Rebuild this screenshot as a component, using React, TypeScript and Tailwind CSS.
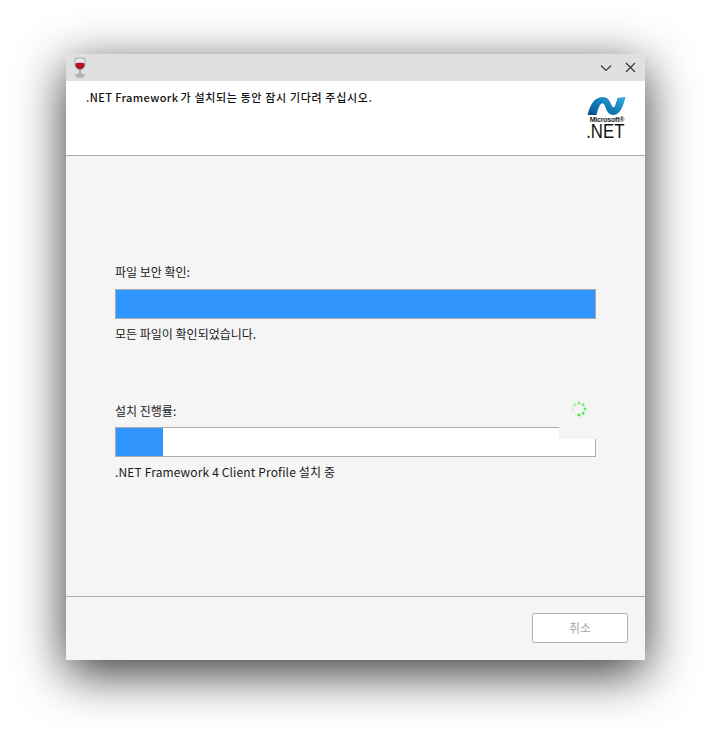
const font = { fontFamily: '"Noto Sans CJK KR", "Noto Sans", sans-serif' };

function WineGlass() {
  return (
    <svg width="14" height="21" viewBox="0 0 14 21">
      <path d="M2.5 1 H11.5 C12.6 5 12.6 8.5 11.2 10.5 C10.2 12 8.6 12.6 7 12.6 C5.4 12.6 3.8 12 2.8 10.5 C1.4 8.5 1.4 5 2.5 1 Z" fill="#e4e4e4" stroke="#9a9a9a" strokeWidth="0.8" />
      <path d="M2.3 6.6 C4.5 5.6 9.5 5.6 11.7 6.6 C11.9 10 9.8 12.2 7 12.2 C4.2 12.2 2.1 10 2.3 6.6 Z" fill="#b5101f" />
      <rect x="6.1" y="12.6" width="1.8" height="5" fill="#a8a8a8" />
      <ellipse cx="7" cy="18.6" rx="4.3" ry="1.6" fill="#c4c4c4" stroke="#8e8e8e" strokeWidth="0.7" />
    </svg>
  );
}

function NetLogo() {
  return (
    <div className="flex w-[42px] flex-col items-center">
      <svg width="39" height="18" viewBox="0 0 38 18">
        <defs>
          <linearGradient id="netBlue" x1="0" x2="1" y1="1" y2="0">
            <stop offset="0" stopColor="#0a4f86" />
            <stop offset="0.5" stopColor="#137fbd" />
            <stop offset="1" stopColor="#35ade2" />
          </linearGradient>
        </defs>
        <path d="M0 18 C2 10 6 0 15 0 C21 0 22 4 24 8 C25.5 11 26.5 11 27.5 9 L30 1 L38 0 C36 8 33 18 26 18 C20 18 19 12 17 8 C15.5 5 13.5 6 12 9 C10.5 12 9.5 15 9 18 Z" fill="url(#netBlue)" />
      </svg>
      <span className="mt-[2px] pl-[2px] text-[7px] font-bold leading-[6px] tracking-[-0.2px] text-[#222]" style={{ fontFamily: '"Liberation Sans", sans-serif' }}>Microsoft®</span>
      <span className="origin-right scale-x-[0.8] self-end pr-[3px] text-[21px] leading-[15px] text-[#111]" style={{ fontFamily: '"Liberation Sans", sans-serif' }}>.NET</span>
    </div>
  );
}

function Spinner() {
  const dots = [
    [8, 2, 0.65], [12.2, 3.8, 0.7], [14, 8, 0.8], [12.2, 12.2, 0.9], [8, 14, 1], [3.8, 12.2, 0.06], [2, 8, 0.2], [3.8, 3.8, 0.45],
  ];
  return (
    <svg width="16" height="16" viewBox="0 0 16 16">
      {dots.map(([x, y, o], i) => (
        <path key={i} d={`M${x - 1.5} ${y - 0.5}h1v-1h1v1h1v1h-1v1h-1v-1h-1z`} fill="#00e800" opacity={o} />
      ))}
    </svg>
  );
}

function Bar({ percent }: { percent: number }) {
  return (
    <div className="h-[30px] border border-[#ababab] bg-white">
      <div className="h-full bg-[#3096fe]" style={{ width: `${percent}%` }} />
    </div>
  );
}

export default function App() {
  return (
    <div className="h-[738px] w-[711px] overflow-hidden bg-white pl-[66px] pt-[54px]" style={font}>
      <div className="flex h-[606px] w-[579px] flex-col overflow-hidden rounded-t-[6px] bg-[#f5f5f5] shadow-[0_13px_50px_rgba(0,0,0,0.8)]">
        <div className="flex h-[27px] shrink-0 items-center justify-between bg-[#dfe0e1] pl-[7px] pr-[9px]">
          <WineGlass />
          <div className="flex items-center gap-[13px] text-[#333]">
            <svg width="12" height="12" viewBox="0 0 12 12" fill="none" stroke="currentColor" strokeWidth="1.1">
              <path d="M1 3.5 L6 8.5 L11 3.5" />
            </svg>
            <svg width="11" height="11" viewBox="0 0 11 11" fill="none" stroke="currentColor" strokeWidth="1.1">
              <path d="M1 1 L10 10 M10 1 L1 10" />
            </svg>
          </div>
        </div>

        <div className="flex h-[75px] shrink-0 justify-between border-b border-[#ababab] bg-white pl-[20px] pr-[18px]">
          <p className="flex gap-[2px] pt-[8px] text-[11px] font-medium leading-[16px] text-[#111]">
            <span className="tracking-[0.4px]">.NET Framework</span>
            <span className="tracking-[0.65px]">가 설치되는 동안 잠시 기다려 주십시오.</span>
          </p>
          <div className="pt-[16px]"><NetLogo /></div>
        </div>

        <div className="flex flex-1 flex-col px-[49px] pt-[107px]">
          <p className="text-[12px] leading-[18px] text-[#1a1a1a]">파일 보안 확인:</p>
          <div className="mt-[8px]"><Bar percent={100} /></div>
          <p className="mt-[6px] text-[12px] leading-[18px] text-[#1a1a1a]">모든 파일이 확인되었습니다.</p>

          <div className="relative mt-[59px]">
            <p className="text-[12px] leading-[18px] text-[#1a1a1a]">설치 진행률:</p>
            <div className="mt-[7px]"><Bar percent={9.8} /></div>
            <div className="absolute right-0 top-[-1px] h-[38px] w-[37px] bg-[#f5f5f5] pl-[12px]">
              <Spinner />
            </div>
            <p className="mt-[6px] text-[12px] leading-[18px] tracking-[0.14px] text-[#1a1a1a]">.NET Framework 4 Client Profile 설치 중</p>
          </div>
        </div>

        <div className="flex h-[64px] shrink-0 items-start justify-end border-t border-[#ababab] pr-[17px] pt-[16px]">
          <button className="h-[30px] w-[96px] rounded-[2px] border border-[#b4b4b4] bg-white text-[12px] text-[#a8a8a8]">취소</button>
        </div>
      </div>
    </div>
  );
}
